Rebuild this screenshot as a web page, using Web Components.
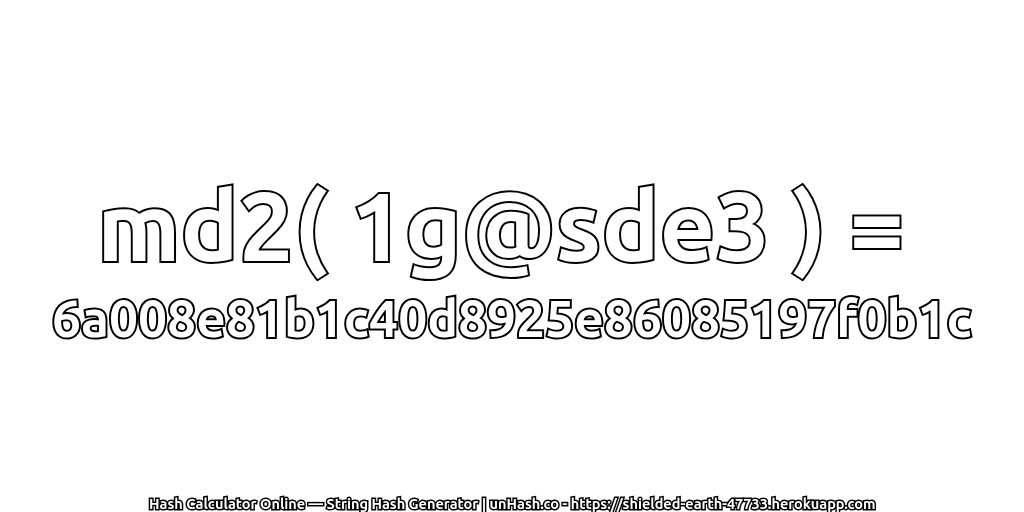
<!DOCTYPE html><html><head><style>
html,body{margin:0;height:100%;background:#fff}
</style></head><body><hash-page>
<span slot="title">md2( 1g@sde3 ) = </span>
<span slot="hash">6a008e81b1c40d8925e86085197f0b1c</span>
<span slot="foot">Hash Calculator Online — String Hash Generator | unHash.co - https://shielded-earth-47733.herokuapp.com</span>
</hash-page>
<script>
class HashPage extends HTMLElement{constructor(){super();this.attachShadow({mode:'open'}).innerHTML=`<style>
:host{display:flex;flex-direction:column;width:1024px;height:512px;font-family:Ubuntu,"Noto Sans","DejaVu Sans",sans-serif;color:#fff;align-items:center;overflow:hidden}
.main{flex:1;display:flex;flex-direction:column;align-items:center;justify-content:center;padding-top:25px;gap:11px}
.t,.h,.f{paint-order:stroke fill;white-space:pre;will-change:transform}
.t{font-size:97px;font-weight:700;line-height:104px;-webkit-text-stroke:4px #000}
.h{font-size:51.5px;font-weight:700;line-height:60px;-webkit-text-stroke:4px #000}
.f{font-size:14.5px;font-weight:700;line-height:16px;-webkit-text-stroke:3px #000}
</style><div class="main"><div class="t"><slot name="title"></slot></div><div class="h"><slot name="hash"></slot></div></div><div class="f"><slot name="foot"></slot></div>`}}
customElements.define('hash-page',HashPage);
</script></body></html>
